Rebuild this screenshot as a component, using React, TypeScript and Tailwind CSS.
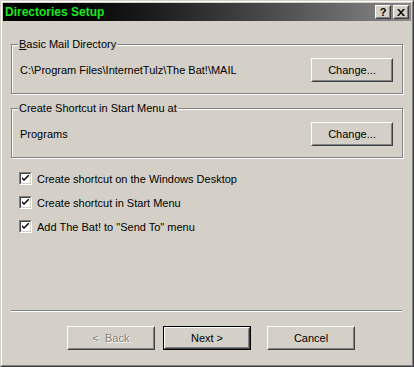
import React from "react"

const font = { fontFamily: '"Liberation Sans", Arial, sans-serif' }

function WinButton({
  children,
  width = "w-[88px]",
  isDefault = false,
  disabled = false,
}: {
  children: React.ReactNode
  width?: string
  isDefault?: boolean
  disabled?: boolean
}) {
  const inner = (
    <div className="h-full w-full border border-t-white border-l-white border-r-[#404040] border-b-[#404040]">
      <div className="h-full w-full border border-t-[#d4d0c8] border-l-[#d4d0c8] border-r-[#808080] border-b-[#808080] flex items-center justify-center">
        <span
          className={disabled ? "text-[#808080] [text-shadow:1px_1px_0_white]" : "text-black"}
        >
          {children}
        </span>
      </div>
    </div>
  )
  return (
    <div className={`${width} h-[24px] ${isDefault ? "border border-black" : ""}`}>{inner}</div>
  )
}

function GroupBox({ label, children }: { label: React.ReactNode; children: React.ReactNode }) {
  return (
    <div className="relative h-[50px] border border-[#808080] shadow-[inset_1px_1px_0_white,1px_1px_0_white]">
      <div className="absolute left-[6px] top-[-8px] bg-[#d4d0c8] px-[1px] leading-[14px]">{label}</div>
      {children}
    </div>
  )
}

function CheckRow({ label }: { label: string }) {
  return (
    <div className="flex items-center h-[13px]">
      <div className="w-[13px] h-[13px] border border-t-[#808080] border-l-[#808080] border-r-white border-b-white">
        <div className="w-full h-full border border-t-[#404040] border-l-[#404040] border-r-[#d4d0c8] border-b-[#d4d0c8] bg-white flex items-center justify-center">
          <svg width="7" height="7" viewBox="0 0 7 7">
            <path d="M0 2 L0 4 L2 6 L7 1 L7 -1 L2 4 Z" fill="black" />
          </svg>
        </div>
      </div>
      <span className="ml-[5px] leading-[14px]">{label}</span>
    </div>
  )
}

function TitleButton({ children }: { children: React.ReactNode }) {
  return (
    <div className="w-[16px] h-[14px] bg-[#d4d0c8] border border-t-white border-l-white border-r-[#404040] border-b-[#404040]">
      <div className="w-full h-full border border-t-[#d4d0c8] border-l-[#d4d0c8] border-r-[#808080] border-b-[#808080] flex items-center justify-center">
        {children}
      </div>
    </div>
  )
}

export default function App() {
  return (
    <div
      className="w-[414px] h-[367px] bg-[#d4d0c8] text-[11px] text-black border border-t-[#d4d0c8] border-l-[#d4d0c8] border-r-[#404040] border-b-[#404040]"
      style={font}
    >
      <div className="w-full h-full border border-t-white border-l-white border-r-[#808080] border-b-[#808080] p-[1px] flex flex-col">
        {/* Title bar */}
        <div className="h-[18px] flex items-center justify-between pl-[2px] pr-[2px] bg-gradient-to-r from-black to-[#8a8a8a]">
          <span className="font-bold text-[12px] text-[#1ee81e] leading-none">
            Directories Setup
          </span>
          <div className="flex gap-[2px]">
            <TitleButton>
              <span className="font-bold text-[11px] leading-none mt-[1px]">?</span>
            </TitleButton>
            <TitleButton>
              <svg width="8" height="7" viewBox="0 0 8 7">
                <path d="M0 0 L2 0 L4 2.5 L6 0 L8 0 L5 3.5 L8 7 L6 7 L4 4.5 L2 7 L0 7 L3 3.5 Z" fill="black" />
              </svg>
            </TitleButton>
          </div>
        </div>

        {/* Content */}
        <div className="flex-1 flex flex-col px-[8px] pb-[14px]">
          <div className="mt-[23px]">
            <GroupBox
              label={
                <span>
                  <span className="underline">B</span>asic Mail Directory
                </span>
              }
            >
              <div className="flex items-center justify-between h-full pl-[8px] pr-[9px] pt-[2px]">
                <span>C:\Program Files\InternetTulz\The Bat!\MAIL</span>
                <WinButton width="w-[82px]">Change...</WinButton>
              </div>
            </GroupBox>
          </div>

          <div className="mt-[14px]">
            <GroupBox label="Create Shortcut in Start Menu at">
              <div className="flex items-center justify-between h-full pl-[8px] pr-[9px] pt-[2px]">
                <span>Programs</span>
                <WinButton width="w-[82px]">Change...</WinButton>
              </div>
            </GroupBox>
          </div>

          <div className="mt-[14px] pl-[8px] flex flex-col gap-[11px]">
            <CheckRow label="Create shortcut on the Windows Desktop" />
            <CheckRow label="Create shortcut in Start Menu" />
            <CheckRow label='Add The Bat! to "Send To" menu' />
          </div>

          <div className="mt-auto h-[2px] border-t border-t-[#808080] border-b border-b-white mr-[1px]" />

          <div className="mt-[14px] flex justify-end pr-[48px]">
            <WinButton disabled>&lt;&nbsp;&nbsp;Back</WinButton>
            <div className="ml-[8px]">
              <WinButton isDefault>Next &gt;</WinButton>
            </div>
            <div className="ml-[16px]">
              <WinButton>Cancel</WinButton>
            </div>
          </div>
        </div>
      </div>
    </div>
  )
}
